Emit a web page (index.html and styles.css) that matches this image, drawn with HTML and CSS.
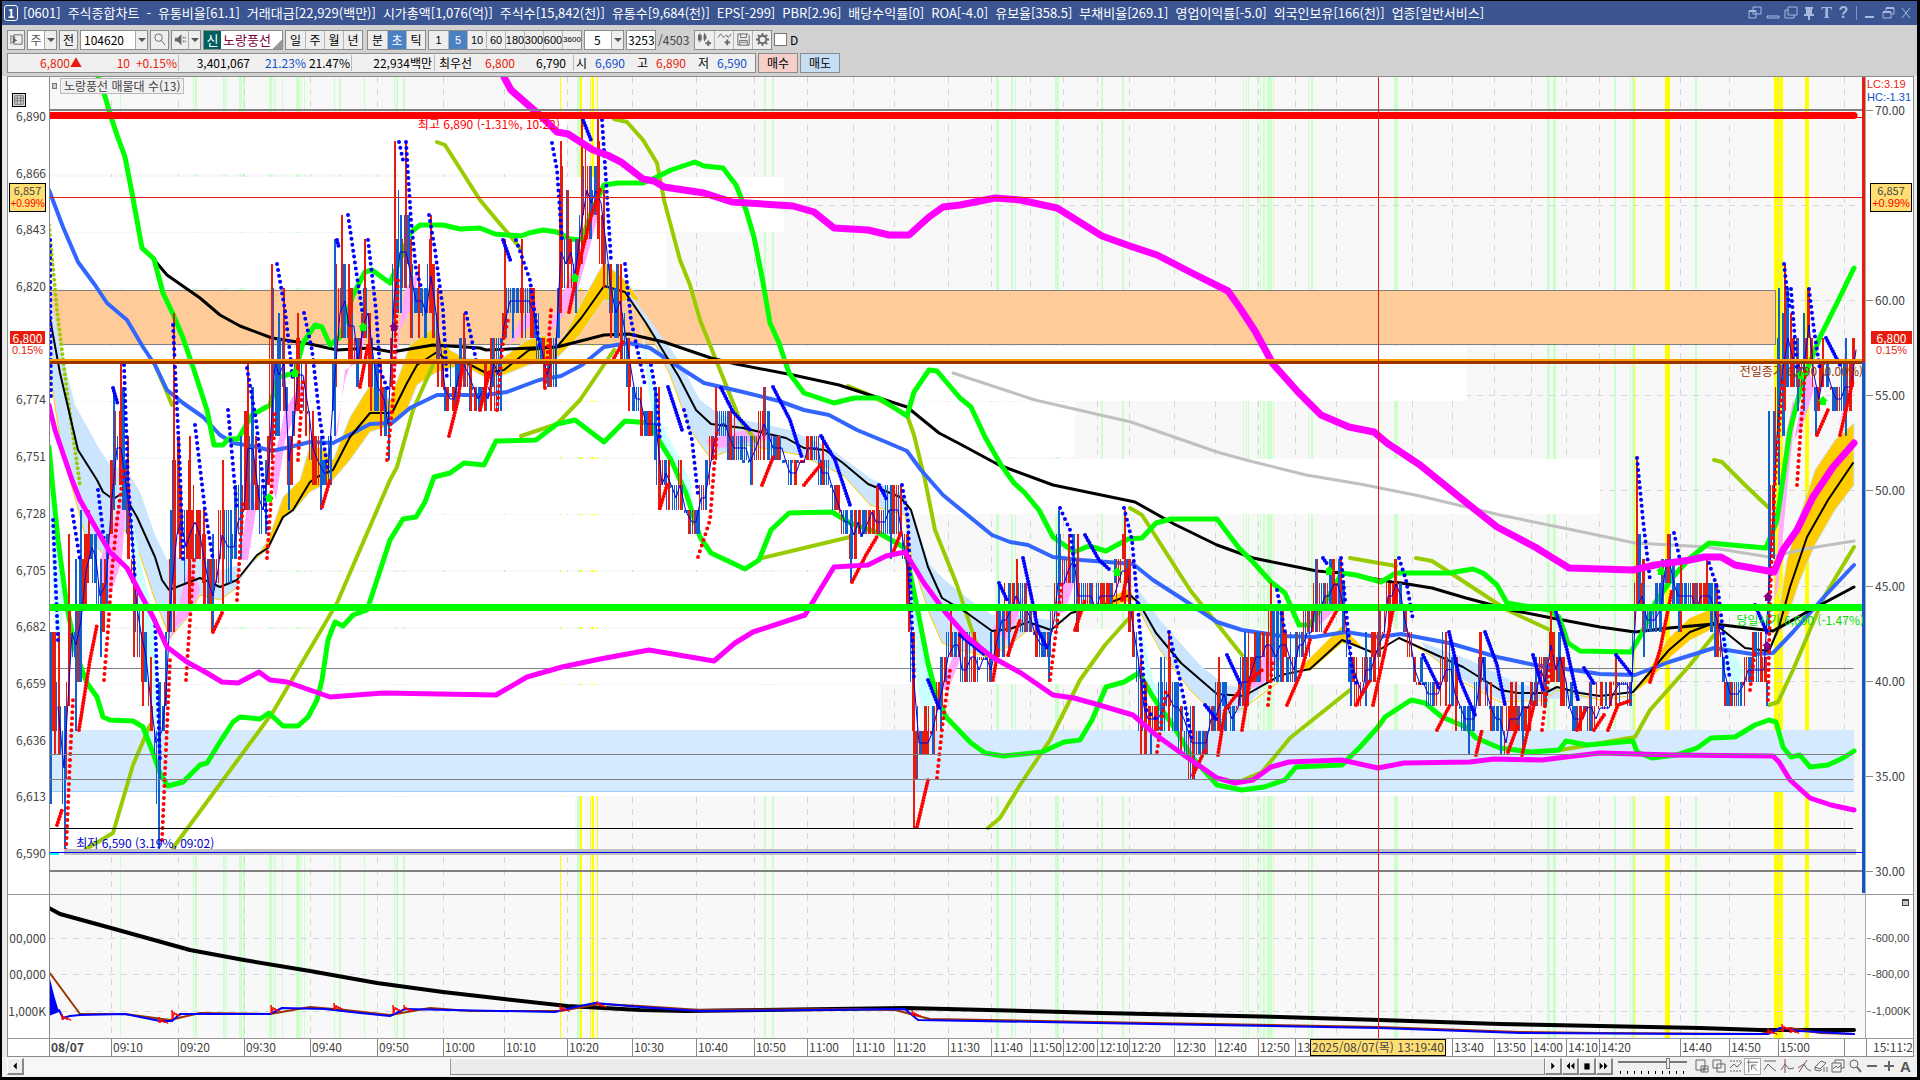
FILE: index.html
```html
<!DOCTYPE html>
<html lang="ko">
<head>
<meta charset="utf-8">
<title>[0601] 주식종합차트</title>
<link rel="stylesheet" href="styles.css">
</head>
<body>
<div class="window">
  <header class="title-bar">
    <span class="badge">1</span>
    <h1 class="title"><span>[0601]</span><span>주식종합차트</span><span>-</span><span>유통비율[61.1]</span><span>거래대금[22,929(백만)]</span><span>시가총액[1,076(억)]</span><span>주식수[15,842(천)]</span><span>유통수[9,684(천)]</span><span>EPS[-299]</span><span>PBR[2.96]</span><span>배당수익률[0]</span><span>ROA[-4.0]</span><span>유보율[358.5]</span><span>부채비율[269.1]</span><span>영업이익률[-5.0]</span><span>외국인보유[166(천)]</span><span>업종[일반서비스]</span></h1>
    <div class="window-tools">
      <button aria-label="창 분리"><svg viewBox="0 0 16 16"><path d="M6 2h8v7H6zM2 6h7v7H2z"/><path class="solid" d="M2 5h7v2H2z"/></svg></button>
      <button aria-label="축소"><svg viewBox="0 0 16 16"><path d="M2 11h12v2H2z"/></svg></button>
      <button aria-label="복제"><svg viewBox="0 0 16 16"><path d="M5 2h9v8H5zM5 5H2v8h9v-3"/></svg></button>
      <button aria-label="고정"><svg viewBox="0 0 16 16"><path class="solid" d="M4 2h8v2h-1v5h2v2H9v4H7v-4H3V9h2V4H4z"/></svg></button>
      <button class="letter" aria-label="글꼴">T</button>
      <button class="letter help" aria-label="도움말">?</button>
      <span class="bar"></span>
      <button aria-label="최소화"><svg viewBox="0 0 16 16"><path class="solid" d="M3 11h9v2H3z"/></svg></button>
      <button aria-label="이전 크기"><svg viewBox="0 0 16 16"><path d="M6 6V3h8v6h-3M3 7h8v6H3z"/><path class="solid" d="M6 2h8v2H6zM3 6h8v2H3z"/></svg></button>
      <button aria-label="닫기"><svg viewBox="0 0 16 16"><path d="M4 3l8 10M12 3L4 13"/></svg></button>
    </div>
  </header>

  <div class="toolbar">
    <button class="box w18" aria-label="메뉴 열기"><svg viewBox="0 0 16 16"><path d="M5 3h9v10H5V3M2 3v10M3 5h3v6H3"/><path class="solid" d="M4 6l5 3-5 2z"/></svg></button>
    <div class="combo w30"><button class="ghost">주</button><button class="drop" aria-label="구분 선택"></button></div>
    <button class="box w19">전</button>
    <div class="combo w68"><input aria-label="종목코드" value="104620"><button class="drop" aria-label="종목 목록"></button></div>
    <button class="box w19" aria-label="검색"><svg viewBox="0 0 16 16"><circle cx="7" cy="6" r="4"/><path d="M10 9l4 5"/></svg></button>
    <div class="combo w30 plain"><button class="ghost" aria-label="소리"><svg viewBox="0 0 16 16"><path class="solid" d="M2 6h3l4-4v12L5 10H2z"/><path d="M11 5v2M11 9v2M13 5v2M13 9v2"/></svg></button><button class="drop" aria-label="소리 선택"></button></div>
    <div class="stock"><b>신</b><span>노랑풍선</span></div>
    <div class="group"><button>일</button><button>주</button><button>월</button><button>년</button></div>
    <div class="group first"><button>분</button><button class="on">초</button><button>틱</button></div>
    <div class="group nums"><button>1</button><button class="on">5</button><button>10</button><button>60</button><button>180</button><button>300</button><button>600</button><button>3600</button></div>
    <div class="combo w40"><input aria-label="간격" value="5"><button class="drop" aria-label="간격 목록"></button></div>
    <input class="count" aria-label="표시 개수" value="3253"><span class="total">/4503</span>
    <div class="group icons">
      <button aria-label="차트 추가"><svg viewBox="0 0 16 16"><path class="solid" d="M1 3h4v6H1zM7 3h3v5H7z"/><path d="M3 1v10M8 1v9"/><path class="thick" d="M12 9v6M9 12h6"/></svg></button>
      <button aria-label="지표 추가"><svg viewBox="0 0 16 16"><path d="M1 6l3-4 3 4 3-3 2 3 3-4"/><path class="thick" d="M11 8v6M8 11h6"/></svg></button>
      <button aria-label="저장"><svg viewBox="0 0 16 16"><path d="M2 2h10l2 2v10H2zM5 2v4h6V2M4 14V9h8v5M5 11h6"/></svg></button>
      <button aria-label="설정"><svg viewBox="0 0 16 16"><circle class="thick" cx="8" cy="8" r="4"/><path class="thick" d="M8 1v3M8 12v3M1 8h3M12 8h3M3 3l2 2M11 11l2 2M13 3l-2 2M3 13l2-2"/></svg></button>
    </div>
    <label class="check"><input type="checkbox">D</label>
  </div>

  <div class="quote-row">
    <div class="quote">
      <span class="c1 up">6,800▲</span><span class="c2 up">10</span><span class="c3 up">+0.15%</span>
      <span class="c4 sep">3,401,067</span><span class="c5 down">21.23%</span><span class="c6">21.47%</span>
      <span class="c7 sep">22,934백만</span><span class="c8 sep">최우선</span><span class="c9 up">6,800</span><span class="c10">6,790</span>
      <span class="c11 sep">시</span><span class="c12 down">6,690</span><span class="c13">고</span><span class="c12 up">6,890</span><span class="c13">저</span><span class="c12 down">6,590</span>
    </div>
    <button class="buy">매수</button><button class="sell">매도</button>
  </div>

  <main class="chart">
    <div class="axis axis-left" id="price-axis">
      <button class="grid-button" aria-label="격자"><svg viewBox="0 0 14 14"><path d="M2 2h10v10H2zM2 5h10M2 8h10M5 2v10M9 2v10"/></svg></button>
    </div>
    <div class="plot">
      <svg id="main-plot" viewBox="49 77 1817 817" preserveAspectRatio="none" role="img" aria-label="가격 차트"></svg>
      <span class="legend"><i></i><b>노랑풍선 매물대 수(13)</b></span>
      <span class="note high">최고 6,890 (-1.31%, 10:22)</span>
      <span class="note low">최저 6,590 (3.19%, 09:02)</span>
      <span class="note close">전일종가 6,790 (0.00%)</span>
      <span class="note open">당일시가 6,690 (-1.47%)</span>
    </div>
    <div class="axis axis-right" id="ratio-axis">
      <span class="lc">LC:3.19</span><span class="hc">HC:-1.31</span>
    </div>

    <div class="axis axis-left line" id="volume-left"></div>
    <div class="plot line"><svg id="sub-plot" viewBox="49 895 1817 143" preserveAspectRatio="none" role="img" aria-label="보조 지표"></svg></div>
    <div class="axis axis-right line" id="volume-right"><button class="panel-button" aria-label="패널 최대화"></button></div>

    <div class="times line" id="times"></div>
  </main>

  <footer class="bottom">
    <button class="key" aria-label="왼쪽"><svg viewBox="0 0 16 16"><path class="ink" d="M10 4v8L6 8z"/></svg></button>
    <div class="track"><div class="thumb"></div></div>
    <button class="key" aria-label="오른쪽"><svg viewBox="0 0 16 16"><path class="ink" d="M6 4v8l4-4z"/></svg></button>
    <button class="key" aria-label="뒤로"><svg viewBox="0 0 16 16"><path class="ink" d="M8 4v8L4 8zM13 4v8L9 8z"/></svg></button>
    <button class="key" aria-label="정지"><svg viewBox="0 0 16 16"><path class="ink" d="M5 5h6v7H5z"/></svg></button>
    <button class="key" aria-label="앞으로"><svg viewBox="0 0 16 16"><path class="ink" d="M3 4v8l4-4zM8 4v8l4-4z"/></svg></button>
    <label class="speed"><input type="range" aria-label="속도" min="0" max="100" value="74"></label>
    <div class="tools">
      <button aria-label="새 창"><svg viewBox="0 0 16 16"><path d="M2 2h9v10H2zM7 8h7v6H7zM10 8v6M7 11h7"/></svg></button>
      <button aria-label="창 겹치기"><svg viewBox="0 0 16 16"><path d="M2 2h8v8H2zM6 6h8v8H6z"/></svg></button>
      <button aria-label="영역"><svg viewBox="0 0 16 16"><path class="dash" d="M2 3h12M2 13h12"/><path d="M2 10l4-4 3 3 5-5"/></svg></button>
      <button class="pressed" aria-label="커서"><svg viewBox="0 0 16 16"><path d="M2 4h12M4 1v14M7 7l6 6M7 12V7h5"/></svg></button>
      <button aria-label="추세선"><svg viewBox="0 0 16 16"><path d="M2 3h12M2 12l4-6 4 4 4 3"/></svg></button>
      <button aria-label="수직선"><svg viewBox="0 0 16 16"><path class="plum" d="M6 1v14"/><path d="M2 12l4-6 4 5 5-1"/></svg></button>
      <button aria-label="사선"><svg viewBox="0 0 16 16"><path class="plum" d="M3 14L11 2"/><path d="M2 10l6-4 3 5 4 2"/></svg></button>
      <button aria-label="모두 지우기"><svg viewBox="0 0 16 16"><path d="M2 9l6-6 5 2-6 6-5-2v3l5 1 2-2M11 9v5M14 9v5"/></svg></button>
      <button aria-label="차트 복사"><svg viewBox="0 0 16 16"><path d="M5 5V2h9v8h-3M2 5h9v9H2zM3 11l3-3 2 2 3-3"/></svg></button>
      <button aria-label="돋보기"><svg viewBox="0 0 16 16"><circle cx="7" cy="6" r="4"/><path class="thick" d="M10 9l4 5"/></svg></button>
      <button aria-label="축소 보기"><svg viewBox="0 0 16 16"><path class="thick" d="M3 8h10"/></svg></button>
      <button aria-label="확대 보기"><svg viewBox="0 0 16 16"><path class="thick" d="M3 8h10M8 3v10"/></svg></button>
      <button class="letter-a">A</button>
    </div>
  </footer>
</div>
<script src="chart.js"></script>
</body>
</html>
```
FILE: styles.css
```css
* { box-sizing: border-box; }
body {
  margin: 0;
  background: #000;
  color: #000;
  font: 12px/16px "Noto Sans CJK KR", sans-serif;
}
button, input { font: inherit; color: inherit; margin: 0; padding: 0; border: 0; background: none; }
button { display: flex; align-items: center; justify-content: center; white-space: nowrap; }
svg { display: block; fill: none; stroke: #666; stroke-width: 1; }
.solid { fill: #666; stroke: none; }
.thick { stroke-width: 2; }
.ink { fill: #000; stroke: none; }
.plum { stroke: #846; }
.dash { stroke-dasharray: 2 1; }

.window {
  display: flex;
  flex-direction: column;
  min-height: 100vh;
  border: solid #000;
  border-width: 1px 3px 3px 2px;
  background: #e9e9e9;
}

/* title bar */
.title-bar { display: flex; align-items: center; height: 24px; padding: 0 3px 0 2px; background: #3a5592; color: #fff; }
.badge { width: 14px; height: 16px; border: 1px solid #fff; border-radius: 3px; font-weight: bold; line-height: 14px; text-align: center; }
.title { display: flex; gap: 7px; margin: 0 auto 0 5px; font-size: 13px; font-weight: normal; white-space: nowrap; }
.window-tools { display: flex; align-items: center; gap: 2px; }
.window-tools svg { width: 16px; height: 16px; stroke: #a9b9dd; }
.window-tools .solid { fill: #a9b9dd; }
.window-tools .letter { width: 15px; color: #a9b9dd; font: bold 16px/16px "Liberation Serif", serif; }
.window-tools .help { font-family: "Liberation Sans", sans-serif; }
.bar { width: 1px; height: 14px; margin: 0 3px; background: #8396c4; }

/* toolbar */
.toolbar { display: flex; align-items: center; gap: 2px; height: 28px; padding: 1px 5px 0; background: #d1d1d1; white-space: nowrap; }
.toolbar svg { width: 15px; height: 15px; }
.box, .combo, .group, .stock, .count { height: 20px; border: 1px solid #8c8c8c; background: #eee; }
.combo { display: flex; background: #fff; }
.combo input, .ghost { flex: 1; min-width: 0; padding-left: 3px; }
.combo .ghost { padding: 0; color: #555; }
.plain { background: #eee; }
.drop { width: 12px; border-left: 1px solid #aaa; background: #eee; }
.drop::after { content: ""; border: 4px solid transparent; border-top-color: #555; border-bottom: 0; }
.w18 { width: 18px; }
.w19 { width: 19px; }
.w30 { width: 30px; }
.w40 { width: 40px; }
.w40 input { padding-left: 9px; }
.w68 { width: 68px; }
.stock { display: flex; width: 80px; background: linear-gradient(135deg, #fff 90%, #999 90%); color: #7a0040; font-size: 13px; }
.stock b { width: 17px; margin-right: 2px; background: #006060; color: #fff; font-weight: normal; line-height: 18px; text-align: center; }
.stock span { line-height: 17px; }
.group { display: flex; }
.group button { width: 19px; border-left: 1px solid #b5b5b5; }
.group button:first-child { border-left: 0; }
.group .on { background: #4a80c4; color: #fff; }
.nums { font: 11px/16px "Liberation Sans", sans-serif; }
.nums button:last-child { font-size: 8px; }
.first { margin-left: 2px; }
.count { width: 30px; padding-left: 1px; background: #fff; }
.total { width: 34px; color: #444; }
.check { display: flex; align-items: center; gap: 3px; }
.check input { appearance: none; width: 13px; height: 13px; border: 1px solid #777; background: #fff; }

/* quote row */
.quote-row { display: flex; gap: 2px; height: 23px; padding: 0 5px 3px; background: #d1d1d1; }
.quote { display: flex; align-items: center; width: 749px; height: 20px; border: 1px solid #8c8c8c; background: #f0f0f0; white-space: nowrap; text-align: right; }
.quote span { flex: none; }
.up { color: #e81c0c; }
.down { color: #1050c8; }
.sep { border-left: 1px solid #bbb; }
.c1 { width: 74px; }
.c2 { width: 48px; }
.c3 { width: 48px; padding-right: 1px; }
.c4 { width: 72px; }
.c5 { width: 56px; }
.c6 { width: 44px; margin-right: 1px; }
.c7 { width: 81px; margin-right: 2px; }
.c8 { width: 38px; }
.c9 { width: 43px; }
.c10 { width: 51px; margin-right: 7px; }
.c11 { width: 14px; }
.c12 { width: 38px; }
.c13 { width: 23px; }
.buy, .sell { width: 40px; height: 20px; border: 1px solid #8c8c8c; background: #f6cfca; }
.sell { background: #c6ddf3; }

/* chart */
.chart {
  display: grid;
  flex: 1;
  grid-template-columns: 41px minmax(0, 1fr) 47px;
  grid-template-rows: minmax(0, 817fr) minmax(0, 144fr) 18px;
  min-height: 400px;
  margin: 0 3px 0 5px;
  border: 1px solid #8c8c8c;
  background: #fff;
  color: #444;
}
.line { border-top: 1px solid #999; }
.axis, .plot, .times { position: relative; overflow: hidden; }
.plot svg { position: absolute; width: 100%; height: 100%; background: #f8f8f8; stroke: none; }
.axis span { position: absolute; white-space: nowrap; }
.label { transform: translateY(-50%); }
.axis-left .label { right: 3px; }
.axis-right .label { left: 9px; }
.axis-right .label::before { content: ""; position: absolute; top: 8px; left: -9px; width: 7px; height: 1px; background: #888; }
.axis .wide { left: 6px; font: 11px/16px "Liberation Sans", sans-serif; }
.axis-right .wide::before { left: -5px; width: 4px; }
.axis .cursor { right: 3px; width: 37px; height: 29px; border: 1px solid #000; background: #ffdf73; font-size: 11px; line-height: 13px; text-align: center; }
.axis-right .cursor { right: 1px; width: 42px; }
.cursor em { display: block; color: #f00; font: 10px/13px "Liberation Sans", sans-serif; }
.axis-right em { font-size: 11px; }
.axis .now { right: 4px; width: 35px; height: 26px; background: linear-gradient(#e81c0c 13px, #fff 13px); color: #fff; line-height: 13px; text-align: center; }
.axis-right .now { right: 1px; width: 41px; }
.now em { display: block; color: #e81c0c; font: 11px/13px "Liberation Sans", sans-serif; }
.axis .lc, .axis .hc { left: 1px; font: 11px/13px "Liberation Sans", sans-serif; }
.axis .lc { top: 1px; color: #e81c0c; }
.axis .hc { top: 14px; color: #1050c8; }
.grid-button { position: absolute; top: 2%; left: 4px; width: 14px; height: 14px; border: 1px solid #000; background: #ddd; }
.panel-button { position: absolute; top: 4px; right: 4px; width: 7px; height: 7px; border: 1px solid #444; border-top-width: 2px; background: #ccc; }
.legend { position: absolute; top: 1px; left: 3px; display: flex; align-items: center; gap: 3px; white-space: nowrap; }
.legend i { width: 5px; height: 6px; border: 1px solid #777; background: #ccc; }
.legend b { padding: 0 3px; border: 1px solid #bbb; background: #f0f0f0; font-weight: normal; line-height: 14px; }
.note { position: absolute; white-space: nowrap; transform: translateY(-50%); }
.high { left: 20.3%; top: 5.8%; color: #f00; }
.low { left: 1.5%; top: 93.8%; color: #00c; }
.close { right: 3px; top: 36%; color: #930; }
.open { right: 2px; top: 66.5%; color: #0d0; }
.times { grid-column: 1 / 4; }
.times span { position: absolute; top: 0; bottom: 0; padding-left: 1px; border-left: 1px solid #888; line-height: 16px; white-space: nowrap; }
.times .day { font-weight: bold; }
.times .end { border-left: 0; }
.times .moment { width: 136px; padding: 0; border: 1px solid #000; background: #ffdf73; line-height: 14px; text-align: center; }

/* bottom bar */
.bottom { display: flex; align-items: center; height: 20px; padding: 0 3px 2px 5px; background: #f0f0f0; }
.key { width: 17px; height: 17px; border: solid; border-width: 1px 2px 2px 1px; border-color: #fff #888 #888 #fff; background: #eee; }
.key svg { width: 16px; height: 16px; }
.track { flex: 1; height: 17px; background: #f7f7f7; }
.thumb { width: 72%; height: 17px; margin-left: 28%; border: 1px solid #888; border-color: #fff #888 #888 #999; background: #ececec; }
.speed { width: 69px; height: 18px; margin: 0 6px 0 5px; background: repeating-linear-gradient(90deg, #000 0 1px, transparent 1px 7px) 2px 14px / 100% 3px no-repeat; }
.speed input { display: block; width: 69px; height: 12px; appearance: none; background: linear-gradient(#777, #777) 0 4px / 100% 2px no-repeat; }
.speed input::-webkit-slider-thumb { appearance: none; width: 4px; height: 11px; border: 1px solid #777; background: #eee; }
.tools { display: flex; }
.tools button { width: 17px; height: 17px; }
.tools svg { width: 16px; height: 16px; }
.tools .pressed { border: 1px solid #aaa; background: #fff; }
.tools .letter-a { color: #555; font: bold 15px/17px "Liberation Sans", sans-serif; }
```
FILE: chart.js
```js
const NS = 'http://www.w3.org/2000/svg';
const main = document.getElementById('main-plot');
const sub = document.getElementById('sub-plot');

function add(svg, tag, attrs) {
  const node = document.createElementNS(NS, tag);
  for (const key in attrs) node.setAttribute(key, attrs[key]);
  svg.appendChild(node);
}
const rect = (svg, x, y, width, height, fill) => add(svg, 'rect', { x, y, width, height, fill });
const line = (svg, points, stroke, w, more) => add(svg, 'polyline', Object.assign({
  points, stroke, 'stroke-width': w, fill: 'none', 'stroke-linejoin': 'round', 'stroke-linecap': 'round'
}, more));
const area = (points, fill, stroke) => add(main, 'polygon', { points, fill, stroke: stroke || 'none' });

/* time grid */
const times = [[111, '09:10'], [178, '09:20'], [244, '09:30'], [310, '09:40'], [377, '09:50'], [443, '10:00'], [504, '10:10'], [567, '10:20'], [632, '10:30'], [696, '10:40'], [754, '10:50'], [807, '11:00'], [853, '11:10'], [894, '11:20'], [948, '11:30'], [991, '11:40'], [1030, '11:50'], [1063, '12:00'], [1097, '12:10'], [1129, '12:20'], [1174, '12:30'], [1215, '12:40'], [1258, '12:50'], [1295, '13'], [1336, ''], [1412, ''], [1452, '13:40'], [1494, '13:50'], [1531, '14:00'], [1566, '14:10'], [1599, '14:20'], [1680, '14:40'], [1729, '14:50'], [1778, '15:00'], [1844, '']];
const green = [[120, 1], [193, 1], [195, 2], [223, 2], [226, 1], [239, 3], [243, 2], [269, 3], [273, 1], [275, 1], [282, 1], [296, 4], [301, 1], [304, 1], [334, 1], [339, 2], [364, 1], [394, 1], [396, 2], [403, 2], [577, 3], [764, 2], [772, 2], [996, 3], [1011, 2], [1015, 1], [1055, 4], [1101, 2], [1122, 2], [1243, 1], [1246, 1], [1248, 1], [1257, 1], [1260, 1], [1263, 2], [1267, 5], [1273, 1], [1308, 1], [1311, 2], [1394, 4], [1547, 3], [1553, 3], [1614, 2], [1630, 1], [1632, 2], [1695, 2]];
const yellow = [[560, 1], [580, 2], [590, 1], [592, 2], [597, 1], [1634, 1], [1665, 5], [1774, 9], [1805, 4]];
function grid(svg, top, height, levels) {
  green.forEach(([x, w]) => rect(svg, x, top, w, height, '#ccffcc'));
  yellow.forEach(([x, w]) => rect(svg, x, top, w, height, '#ffff00'));
  const dash = { 'stroke-dasharray': '6 6', 'stroke-linecap': 'butt' };
  times.forEach(([x]) => line(svg, `${x + .5},${top} ${x + .5},${top + height}`, '#d6d6d6', 1, dash));
  levels.forEach(y => line(svg, `49,${y + .5} 1862,${y + .5}`, '#d6d6d6', 1, dash));
}
grid(main, 77, 817, [205, 300, 395, 490, 586, 681, 776]);
grid(sub, 895, 143, [938, 974, 1011]);

/* volume by price */
[[119, 566], [177, 784], [233, 666], [346, 1467], [402, 1075], [459, 1600], [515, 863], [572, 994], [629, 1485], [685, 881], [741, 1700], [797, 575]]
  .forEach(([y, x]) => rect(main, 50, y, x - 50, 55, '#ffffff'));
add(main, 'rect', { x: 49.5, y: 290.5, width: 1726, height: 54, fill: '#ffcc99', stroke: '#808080' });
rect(main, 50, 730, 1804, 61, '#d6eaff');
rect(main, 50, 791, 1804, 1, '#99ccff');
line(main, '49,668.5 1853,668.5', '#808080', 1);

/* trend clouds */
const BLUE = '#cce5ff', GOLD = '#ffcc00', PINK = '#ffaaff', CYAN = '#ccffff';
area('49,290 60,345 75,405 100,450 110,465 127,470 140,492 155,535 167,560 187,555 200,558 220,570 240,565 238,587 220,600 200,595 187,618 170,638 155,600 140,555 125,530 107,558 85,535 70,480 60,440 49,365', BLUE);
line(main, '49,365 60,440 70,480 85,535 107,558 125,530 140,555 155,600 170,638 187,618 200,595 220,600 238,587', GOLD, 1);
area('240,580 268,540 283,497 300,480 310,445 325,450 333,460 350,417 370,385 390,400 410,345 433,328 450,350 465,358 480,360 500,360 527,340 545,335 557,350 580,305 604,262 625,280 640,300 620,302 604,300 580,335 557,358 529,365 504,375 486,378 463,365 437,372 417,385 407,410 392,425 370,432 350,460 333,480 310,492 293,512 283,518 268,548 245,570', GOLD, BLUE);
area('625,288 650,320 680,362 700,400 720,415 745,420 790,430 830,448 870,478 905,495 915,520 930,565 945,580 970,600 992,615 1010,614 1050,620 1051,635 1028,630 1010,645 990,657 960,650 942,643 928,610 912,560 905,515 870,505 843,475 800,455 745,445 710,458 690,430 670,375 646,325', BLUE);
line(main, '646,325 670,375 690,430 710,458 745,445 800,455 843,475 870,505 905,515 912,560 928,610 942,643 960,650 990,657 1010,645 1028,630 1051,635', GOLD, 1);
area('1071,614 1106,600 1130,588 1134,600 1106,607', GOLD);
area('1135,585 1160,620 1200,665 1225,685 1245,688 1270,675 1244,712 1217,716 1190,690 1160,650 1139,610', BLUE);
line(main, '1139,610 1160,650 1190,690 1217,716 1244,708 1281,680', GOLD, 1);
area('1300,668 1342,626 1362,647 1342,643 1310,671', GOLD);
area('1421,642 1470,660 1520,685 1580,690 1600,698 1500,700 1463,680 1430,655', BLUE);
line(main, '1408,642 1430,655 1463,682 1500,702 1545,700 1557,690 1600,700 1635,695', GOLD, 1);
area('1635,692 1669,638 1690,618 1714,608 1722,620 1714,628 1690,640 1669,658 1650,680', GOLD);
area('1775,640 1779,610 1787,560 1800,515 1815,470 1835,440 1854,423 1854,485 1835,510 1815,545 1800,580 1785,625', GOLD, BLUE);
area('49,480 56,500 64,600 60,650 54,620', CYAN);
area('127,490 140,560 152,610 159,680 156,740 140,640', CYAN);
area('908,560 918,620 930,680 934,700 928,735 918,690', CYAN);
area('640,320 660,420 690,480 697,530 680,480 655,440', CYAN);
area('1139,620 1153,680 1175,720 1168,735 1148,690', CYAN);
area('1719,610 1732,650 1745,670 1735,690 1722,660', CYAN);
area('100,560 122,500 128,470 122,560 112,590 104,600', PINK);
area('170,640 190,560 200,590 190,615 178,625', PINK);
area('240,560 250,480 256,510 248,560', PINK);
area('270,480 285,410 308,370 303,395 285,440 276,500', PINK);
area('333,450 345,380 366,320 362,360 345,370 338,430', PINK);
area('390,390 405,290 418,270 415,300 400,330 396,370', PINK);
area('503,360 520,320 540,300 530,325 510,345', PINK);
area('547,335 568,280 600,195 600,210 575,300 555,325', PINK);
area('706,440 745,430 780,438 745,443 712,450', PINK);
area('940,690 955,650 960,660 948,690', PINK);
area('992,630 1016,595 1024,600 1008,640', PINK);
area('1055,615 1070,555 1075,580 1065,612', PINK);
area('1245,690 1278,630 1280,660 1262,685', PINK);
area('1315,620 1340,580 1340,605 1320,625', PINK);
area('1640,640 1665,570 1672,575 1655,620', PINK);
area('1774,600 1785,440 1793,400 1796,410 1788,480 1778,590', PINK);
area('1794,440 1808,370 1815,385 1803,425', PINK);
area('1838,425 1855,375 1852,395', PINK);

/* moving averages that run behind the candles */
const OLIVE = '#99cc00';
line(main, '49,225 57,310 68,400 80,485', OLIVE, 4, { 'stroke-dasharray': '0 5' });
['86,849 113,833 133,765 150,725', '173,848 273,712 337,603 390,480 397,467 413,410 433,365', '437,142 445,145 480,200 521,249', '521,436 557,424 580,400 614,350', '614,119 627,122 643,140 657,163 664,200 680,260 690,285 700,320 720,370 740,420 757,442', '762,558 850,537', '848,386 870,395 907,415 914,435 925,480 935,530 957,585 975,640 985,655', '988,828 1000,818 1020,785 1050,740 1080,680 1105,645 1130,617', '1130,508 1142,515 1190,590 1242,655', '1243,780 1262,772 1290,738 1350,690', '1350,558 1396,566', '1416,558 1432,561 1466,583 1507,610 1550,630', '1560,750 1590,745 1635,737 1650,710 1690,665 1714,635', '1714,460 1722,462 1745,485 1768,507', '1769,705 1778,702 1793,670 1824,597 1854,547', '155,365 165,388 172,405']
  .forEach(p => line(main, p, OLIVE, 4));
line(main, '953,373 1035,400 1131,422 1217,452 1246,460 1306,475 1360,484 1420,496 1500,515 1573,530 1635,543 1707,547 1769,557 1810,548 1854,541', '#c0c0c0', 3);
line(main, '49,190 63,227 78,262 95,285 107,303 127,320 143,347 155,365 167,390 183,403 203,417 220,435 233,443 257,447 272,451 290,447 310,442 333,443 353,433 370,424 392,423 410,408 437,395 486,395 507,392 539,380 561,376 582,365 604,347 629,343 650,348 671,362 704,383 743,392 779,401 804,410 829,415 857,430 886,442 907,451 921,470 943,495 960,509 992,535 1010,542 1028,545 1053,557 1081,560 1133,564 1153,580 1181,598 1217,622 1242,630 1281,636 1314,637 1346,632 1378,637 1401,634 1449,643 1497,657 1535,665 1573,670 1600,674 1635,675 1669,662 1714,648 1752,654 1773,653 1793,632 1824,597 1854,565', '#3366ff', 4);
line(main, '156,262 167,275 200,298 220,315 240,326 272,338 310,344 337,350 370,348 392,352 433,345 480,348 486,350 557,347 604,335 629,334 664,342 711,358 736,364 793,375 839,385 907,407 939,433 960,444 999,465 1053,485 1135,502 1174,524 1217,545 1253,558 1317,571 1342,573 1392,582 1401,583 1432,588 1466,598 1511,610 1552,618 1600,627 1635,632 1669,628 1714,624 1773,631 1807,612 1854,587', '#000', 3);
line(main, '49,313 60,373 78,450 97,480 103,492 113,499 123,493 137,517 155,557 162,580 169,590 187,583 200,578 220,587 237,580 257,555 268,548 283,517 293,510 310,482 317,477 333,470 350,437 370,413 392,413 407,383 417,365 437,352 450,363 463,361 486,373 504,370 529,350 557,347 582,317 604,286 625,292 646,323 679,377 696,410 711,424 743,428 786,438 804,448 825,450 843,463 868,484 900,497 911,510 928,567 942,598 967,613 992,631 1010,629 1028,622 1051,630 1071,613 1106,604 1130,595 1139,603 1156,633 1181,663 1217,694 1244,696 1281,675 1310,669 1342,640 1374,653 1399,638 1421,648 1463,667 1500,690 1518,693 1545,693 1557,687 1580,693 1600,696 1633,692 1669,650 1690,632 1714,623 1745,648 1769,651 1779,627 1790,587 1807,537 1828,500 1853,463', '#000', 2);

line(main, '98,77 104,93 111,117 117,135 125,157 132,193 142,248 154,259 163,293 173,314 183,338 193,367 207,410 214,445 223,445 228,439 238,439 252,415 270,405 278,377 295,373 303,343 315,325 322,327 330,345 340,337 353,295 365,272 372,270 390,283 400,260 410,233 420,225 443,225 460,229 480,228 495,234 521,236 529,233 543,230 557,232 570,239 582,240 591,213 604,185 618,183 643,183 657,177 671,170 695,162 704,166 723,168 736,185 746,210 754,237 762,277 770,323 779,343 789,373 804,393 834,403 854,398 879,398 907,416 914,392 929,370 937,371 960,398 971,407 985,437 1001,465 1014,483 1024,492 1039,510 1053,537 1074,552 1089,546 1106,551 1128,539 1142,538 1156,523 1171,519 1217,519 1239,548 1253,562 1271,582 1285,593 1299,625 1310,625 1328,597 1342,573 1356,575 1381,582 1396,573 1449,573 1473,569 1483,573 1497,585 1507,603 1549,610 1559,617 1568,643 1580,651 1631,652 1642,633 1655,603 1673,577 1690,558 1709,543 1766,548 1777,520 1790,430 1803,380 1820,337 1837,303 1854,268', '#00ff00', 5);
line(main, '49,447 53,490 58,540 67,607 77,657 87,683 97,697 103,717 110,720 133,721 143,727 153,753 160,773 168,786 183,782 200,765 207,763 220,742 233,722 240,717 260,719 269,713 283,726 298,726 308,717 317,700 322,680 328,640 335,622 343,626 353,615 367,610 377,580 390,540 403,519 416,517 425,502 434,477 450,473 464,463 484,465 496,441 536,440 557,424 575,420 604,442 625,421 650,423 657,437 671,460 686,493 700,537 711,553 745,569 759,560 771,530 789,513 832,512 850,523 879,533 905,548 917,607 928,663 937,697 946,717 971,743 985,753 1003,756 1042,752 1064,742 1080,740 1092,720 1106,687 1124,682 1139,673 1153,697 1174,727 1192,757 1217,785 1242,790 1264,787 1285,780 1296,767 1342,765 1360,747 1378,727 1385,717 1411,700 1425,703 1442,717 1466,727 1476,738 1500,748 1531,752 1559,750 1566,741 1587,745 1633,741 1637,752 1652,758 1676,755 1697,748 1711,738 1735,737 1755,725 1769,720 1776,722 1783,747 1791,757 1800,755 1810,767 1828,765 1843,758 1854,751', '#00ff00', 5);

/* candles: [x, high, low] turning points; prices move in ticks of 10 won */
const swings = [[50, 640, 800], [54, 640, 750], [58, 640, 760], [64, 700, 852], [68, 540, 700], [75, 560, 720], [80, 500, 690], [88, 500, 560], [100, 560, 650], [106, 540, 600], [113, 385, 520], [120, 360, 490], [127, 440, 560], [133, 560, 650], [142, 610, 700], [150, 660, 720], [158, 690, 852], [165, 640, 700], [170, 500, 640], [173, 315, 630], [180, 480, 560], [189, 440, 620], [196, 500, 560], [203, 510, 600], [212, 540, 630], [222, 470, 600], [230, 500, 590], [240, 440, 560], [247, 365, 500], [255, 430, 520], [265, 470, 530], [271, 265, 470], [278, 310, 430], [283, 290, 400], [288, 440, 510], [297, 310, 400], [305, 370, 435], [312, 400, 490], [320, 440, 500], [330, 440, 490], [334, 240, 440], [341, 220, 340], [348, 270, 360], [357, 340, 390], [364, 240, 340], [370, 330, 400], [380, 370, 430], [388, 400, 460], [394, 142, 340], [400, 220, 310], [405, 145, 290], [410, 230, 330], [418, 270, 330], [425, 290, 340], [430, 215, 320], [437, 300, 380], [444, 390, 410], [455, 360, 400], [463, 313, 380], [470, 370, 410], [480, 385, 410], [490, 340, 410], [500, 340, 410], [504, 240, 340], [512, 290, 340], [521, 240, 340], [530, 290, 340], [543, 340, 385], [555, 340, 390], [560, 143, 300], [567, 190, 290], [575, 240, 315], [581, 120, 260], [590, 165, 245], [597, 120, 240], [603, 200, 290], [610, 265, 340], [620, 265, 360], [628, 340, 410], [640, 385, 435], [650, 400, 435], [658, 390, 510], [668, 460, 510], [680, 460, 510], [688, 510, 535], [695, 510, 535], [705, 460, 510], [715, 388, 460], [730, 412, 460], [750, 435, 485], [763, 388, 460], [778, 435, 460], [790, 460, 485], [810, 435, 460], [822, 435, 485], [835, 485, 510], [850, 510, 575], [862, 505, 535], [877, 485, 535], [890, 485, 555], [900, 485, 535], [908, 550, 630], [913, 640, 828], [920, 720, 755], [932, 700, 755], [940, 660, 735], [950, 610, 660], [965, 640, 680], [990, 640, 680], [998, 590, 665], [1008, 585, 650], [1016, 558, 620], [1025, 583, 640], [1035, 620, 655], [1048, 630, 680], [1058, 510, 620], [1068, 535, 580], [1077, 545, 630], [1090, 583, 610], [1110, 583, 605], [1124, 510, 600], [1132, 600, 660], [1140, 660, 750], [1150, 720, 755], [1160, 655, 735], [1168, 630, 735], [1180, 705, 755], [1192, 705, 780], [1205, 730, 755], [1218, 655, 730], [1232, 700, 735], [1244, 640, 700], [1258, 633, 680], [1270, 585, 680], [1282, 620, 680], [1295, 640, 680], [1315, 560, 640], [1330, 558, 620], [1340, 558, 610], [1350, 655, 705], [1365, 640, 705], [1378, 610, 660], [1395, 558, 620], [1405, 610, 640], [1414, 660, 690], [1432, 680, 710], [1445, 630, 700], [1455, 655, 730], [1468, 705, 750], [1479, 635, 705], [1490, 680, 730], [1500, 705, 755], [1515, 680, 730], [1522, 690, 755], [1535, 655, 710], [1545, 655, 700], [1550, 610, 690], [1560, 650, 710], [1575, 705, 730], [1590, 680, 730], [1605, 690, 710], [1615, 655, 700], [1630, 680, 705], [1636, 460, 620], [1643, 575, 655], [1655, 585, 635], [1668, 535, 590], [1680, 560, 630], [1695, 583, 610], [1706, 560, 610], [1716, 585, 660], [1724, 680, 705], [1740, 680, 705], [1752, 630, 680], [1760, 635, 680], [1766, 680, 705], [1768, 412, 640], [1773, 410, 560], [1778, 290, 480], [1784, 265, 400], [1790, 315, 385], [1797, 340, 410], [1803, 313, 410], [1808, 290, 340], [1815, 380, 435], [1822, 340, 385], [1835, 385, 410], [1845, 340, 430], [1852, 340, 385]];
const RED = '#e81c0c', NAVY = '#1060d0';
const tick = y => Math.round(116.5 + Math.round((y - 116.5) / 24.57) * 24.57);
let seed = 7;
const rnd = () => (seed = (seed * 16807) % 2147483647) / 2147483647;
const average = [];
swings.forEach(([x, hi, lo], i) => {
  const next = swings[i + 1] || [x + 3, hi, lo];
  const rising = next[1] + next[2] < hi + lo;
  rect(main, x, tick(hi), 2, Math.max(2, tick(lo) - tick(hi)), rising ? NAVY : RED);
  for (let px = x + 2; px < next[0]; px += 2) {
    const f = (px - x) / (next[0] - x);
    const top = hi + (next[1] - hi) * f, bottom = lo + (next[2] - lo) * f;
    const a = top + (bottom - top) * rnd() * .5, b = bottom - (bottom - top) * rnd() * .4;
    const ya = tick(a), yb = Math.max(ya + 3, tick(b));
    const up = rnd() < (rising ? .72 : .3);
    rect(main, px, ya, rnd() < .4 ? 3 : 1, yb - ya, up ? RED : NAVY);
    average.push(`${px + 2},${Math.round((ya + yb) / 2)}`);
  }
});
line(main, average.filter((p, i) => i % 2).join(' '), '#0000dd', 1);

/* trailing stops */
const dots = { 'stroke-dasharray': '0 6' }, dense = { 'stroke-dasharray': '0 3' };
const slope = p => { const q = p.split(' ').map(s => s.split(',').map(Number)); return Math.abs(q[q.length - 1][1] - q[0][1]) / Math.abs(q[q.length - 1][0] - q[0][0]); };
['173,325 180,470 183,560', '124,365 128,480 135,580', '113,388 118,405', '155,620 160,760', '195,425 205,510 213,560', '228,410 237,510', '247,368 256,420 263,480 268,530', '277,264 285,310 293,380', '304,313 312,350 320,420 328,470', '337,240 339,248', '348,215 356,270 362,310', '368,240 376,310 380,370 388,390', '399,142 403,160', '406,142 411,220 416,270 422,290', '429,215 435,250 443,310 447,380', '466,313 476,360', '503,240 511,262', '516,240 530,280 540,350', '552,143 557,170 562,240', '583,120 591,140', '602,120 606,180 611,260', '625,264 631,320 645,385', '651,365 657,400 660,440', '668,387 682,430', '684,410 692,440 698,495', '721,388 733,412 750,430', '773,387 790,420 802,458', '821,436 835,460 850,505', '879,485 887,500', '902,485 908,520 911,600 914,680', '928,680 940,710', '960,635 985,655', '999,583 1007,600', '1023,558 1030,590 1038,630 1048,650', '1060,508 1070,530 1075,570', '1085,535 1099,560 1110,570', '1124,508 1132,540 1139,620 1146,710 1157,720', '1169,632 1180,680 1192,740', '1205,705 1217,720', '1227,655 1240,683', '1277,590 1285,632', '1323,558 1328,565', '1341,558 1346,610 1352,670 1357,685', '1399,558 1406,580 1413,620', '1423,655 1440,690', '1449,632 1460,680 1475,715', '1485,632 1497,665 1505,705', '1533,655 1543,690', '1556,612 1567,650 1578,700', '1584,668 1595,685', '1616,655 1632,675', '1637,458 1643,520 1650,580', '1674,533 1680,560', '1709,563 1718,590 1724,640 1730,680', '1755,605 1768,635', '1784,264 1787,290 1790,310', '1791,289 1795,340 1797,370', '1809,289 1814,330 1820,370', '1826,338 1840,365', '72,510 80,560', '98,490 104,540', '53,520 58,640', '50,240 51,400']
  .forEach(p => line(main, p, '#0000ff', 4, slope(p) > 4 ? dots : dense));
['57,825 62,810', '66,850 70,760 73,700', '79,730 90,660 97,625', '104,680 108,630 112,570 117,520 124,470', '162,840 166,750 170,660', '186,680 190,620 194,560', '213,632 222,613', '237,600 243,500', '267,558 271,500 275,410', '298,460 303,380', '322,507 330,480', '360,387 368,345', '387,460 393,400 398,280', '449,436 458,400 463,360', '480,410 490,370', '497,410 503,340 508,320', '545,388 551,310', '569,312 580,260 590,220 600,190', '614,358 624,340', '660,508 667,485', '698,557 710,520 717,430', '762,485 774,455', '804,485 822,463', '852,582 866,555 878,535', '892,555 902,530', '917,827 928,780', '937,778 943,720 950,670', '993,680 998,650', '1008,655 1020,620', '1050,680 1055,640 1062,580', '1075,630 1085,600', '1122,600 1128,570', '1157,752 1166,690', '1193,775 1205,750', '1218,755 1225,710 1240,690', '1242,730 1250,680 1262,670', '1268,705 1273,660', '1287,705 1300,675 1310,640', '1325,632 1337,610', '1356,705 1370,680', '1373,705 1385,650 1397,590', '1437,730 1450,705', '1476,755 1482,730', '1508,752 1518,725', '1522,755 1535,700', '1542,730 1552,650', '1577,730 1585,710', '1594,730 1604,715', '1608,730 1618,705 1632,700', '1650,682 1660,650 1672,590', '1750,690 1755,650', '1768,700 1770,600 1775,480 1783,380', '1797,485 1800,440 1805,370', '1817,435 1828,410', '1840,435 1853,380']
  .forEach(p => line(main, p, '#ff0000', 4, slope(p) > 6 ? dots : dense));

/* envelope */
line(main, '504,77 511,90 543,118 557,132 568,134 593,150 607,155 621,162 643,179 654,181 664,187 704,193 732,202 793,206 814,212 834,228 868,230 889,235 909,235 929,217 943,207 960,205 995,198 1020,200 1057,208 1070,216 1102,236 1130,246 1157,255 1194,274 1228,291 1240,308 1255,331 1273,364 1298,392 1321,415 1349,427 1374,432 1387,443 1420,465 1463,500 1497,527 1535,547 1569,568 1633,570 1655,565 1690,560 1704,557 1721,557 1735,565 1752,568 1774,572 1783,550 1797,530 1813,497 1833,467 1854,443', '#ff00ff', 7);
line(main, '49,405 55,430 72,480 80,500 97,530 110,552 127,568 140,593 153,617 167,647 187,662 207,673 222,682 238,683 259,672 270,680 287,682 330,697 383,693 496,695 527,677 562,667 600,659 649,650 714,661 735,643 753,632 805,615 820,590 834,567 868,565 886,556 905,552 924,583 946,613 967,637 992,657 1021,673 1053,695 1074,698 1099,705 1133,715 1156,735 1181,753 1217,778 1235,783 1253,780 1271,767 1289,762 1342,760 1378,768 1404,763 1470,762 1494,759 1542,760 1566,757 1600,753 1673,755 1773,756 1779,762 1790,780 1810,798 1831,805 1854,810', '#ff00ff', 5);

/* signal arrows */
[[363, 327, '#00ff00'], [295, 373, '#00ff00'], [269, 498, '#00ff00'], [394, 327, '#800080'], [575, 278, '#00ff00'], [1117, 572, '#00ff00'], [1329, 571, '#00ff00'], [1661, 571, '#00ff00'], [1801, 375, '#00ff00'], [1823, 401, '#00ff00'], [1768, 597, '#800080'], [1767, 646, '#800080']]
  .forEach(([x, y, fill]) => add(main, 'path', { d: `M${x} ${y - 5}l5 5h-2v4h-6v-4h-2z`, fill }));

/* price levels and cursor */
rect(main, 49, 109, 1814, 2, '#808080');
line(main, '45,115.5 1854,115.5', '#ff0000', 7);
rect(main, 49, 117, 1814, 1, '#ff0000');
rect(main, 49, 197, 1814, 1, RED);
rect(main, 49, 359, 1814, 2, '#ff9900');
rect(main, 49, 361, 1814, 3, '#993300');
rect(main, 49, 604, 1814, 7, '#00ff00');
rect(main, 49, 754, 1804, 1, '#808080');
rect(main, 49, 779, 1804, 1, '#808080');
rect(main, 49, 828, 1804, 1, '#000');
rect(main, 64, 849, 1792, 6, '#c0c0c0');
rect(main, 49, 852, 1814, 1, '#0000ff');
rect(main, 49, 853, 10, 2, '#00ffff');
rect(main, 49, 870, 1814, 2, '#808080');
rect(main, 1378, 77, 1, 817, RED);
rect(main, 1862, 77, 3, 285, RED);
rect(main, 1862, 362, 3, 531, '#1058c8');
rect(main, 49, 77, 1, 817, '#888');
rect(main, 1865, 77, 1, 817, '#aaa');

/* lower indicator */
line(sub, '49,908 60,914 111,928 190,950 244,960 310,971 377,983 443,992 504,999 567,1006 640,1010 686,1011 906,1008 1102,1013 1280,1017 1380,1020 1500,1024 1700,1028 1760,1030 1854,1030', '#000', 4);
line(sub, '49,972 55,980 80,1014 125,1014 170,1020 200,1013 270,1014 310,1007 345,1010 390,1015 430,1008 470,1011 560,1011 600,1004 640,1006 700,1010 855,1009 895,1010 930,1019 1041,1021 1151,1023 1379,1027 1520,1032 1600,1033 1760,1034 1790,1028 1820,1033 1854,1034', '#993300', 2);
add(sub, 'polygon', { points: '49,975 54,995 59,1012 49,1016', fill: '#0000ff' });
line(sub, '59,1010 63,1018 70,1016 80,1015 125,1014 145,1018 160,1021 172,1021 180,1014 270,1014 282,1008 325,1009 360,1013 390,1016 405,1009 450,1010 555,1012 575,1007 595,1003 640,1007 700,1011 905,1009 918,1020 1041,1022 1151,1024 1379,1028 1520,1033 1700,1034 1768,1034 1780,1028 1800,1031 1854,1034', '#0000ff', 2);
[[62, 1014, 6], [159, 1017, 6], [172, 1010, 9], [271, 1005, 9], [334, 1003, 7], [393, 1005, 9], [404, 1005, 4], [560, 1005, 7], [597, 1001, 4], [912, 1010, 6], [1768, 1028, 6], [1782, 1024, 8], [1790, 1027, 6]]
  .forEach(([x, y, h]) => add(sub, 'path', { d: `M${x} ${y + h}V${y}l1 ${h}l1-${h - 2}l1 3l1-2l1 3l1-2l1 2l1-1l1 2`, stroke: '#ff0000', fill: 'none' }));
rect(sub, 1378, 895, 1, 143, RED);
rect(sub, 49, 895, 1, 143, '#888');
rect(sub, 1865, 895, 1, 143, '#aaa');

/* axis labels */
function label(id, text, y, top, height, cls) {
  const span = document.createElement('span');
  span.className = cls;
  span.style.top = (y - top) / height * 100 + '%';
  span.innerHTML = text;
  document.getElementById(id).appendChild(span);
}
['6,890', '6,866', '6,843', '6,820', '', '6,774', '6,751', '6,728', '6,705', '6,682', '6,659', '6,636', '6,613', '6,590']
  .forEach((t, i) => label('price-axis', t, 116 + i * 56.7, 77, 817, 'label'));
[[110, '70.00'], [300, '60.00'], [395, '55.00'], [490, '50.00'], [586, '45.00'], [681, '40.00'], [776, '35.00'], [871, '30.00']]
  .forEach(([y, t]) => label('ratio-axis', t, y, 77, 817, 'label'));
['price-axis', 'ratio-axis'].forEach(id => {
  label(id, '6,857<em>+0.99%</em>', 183, 77, 817, 'cursor');
  label(id, '6,800<em>0.15%</em>', 331, 77, 817, 'now');
});
[['00,000', '-600,00', 938], ['00,000', '-800,00', 974], ['1,000K', '-1,000K', 1011]].forEach(([left, right, y]) => {
  label('volume-left', left, y, 895, 143, 'label');
  label('volume-right', right, y, 895, 143, 'label wide');
});
function time(text, x, cls) {
  const span = document.createElement('span');
  span.className = cls;
  span.style.left = (x - 8) / 1905 * 100 + '%';
  span.textContent = text;
  document.getElementById('times').appendChild(span);
}
time('08/07', 49, 'day');
times.forEach(([x, t]) => time(t, x, ''));
time('', 1866, '');
time('15:11:2', 1872, 'end');
time('2025/08/07(목) 13:19:40', 1310, 'moment');
```
